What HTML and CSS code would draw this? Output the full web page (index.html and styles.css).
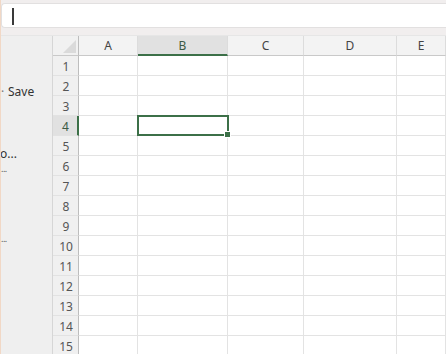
FILE: index.html
```html
<!DOCTYPE html>
<html>
<head>
<meta charset="utf-8">
<link rel="stylesheet" href="styles.css">
</head>
<body>
<div class="topbar">
  <div class="formula"><span class="caret"></span></div>
</div>
<div class="main">
  <div class="side">
    <div class="item item-save"><span class="dot">·</span>Save</div>
    <div class="item item-copy">o...</div>
    <div class="item item-small">...</div>
    <div class="item item-low">...</div>
  </div>
  <div class="sheet">
    <div class="hd corner"><span class="tri"></span></div>
    <div class="hd col">A</div>
    <div class="hd col sel-col">B</div>
    <div class="hd col">C</div>
    <div class="hd col">D</div>
    <div class="hd col">E</div>

    <div class="rh">1</div><div class="c"></div><div class="c"></div><div class="c"></div><div class="c"></div><div class="c"></div>
    <div class="rh">2</div><div class="c"></div><div class="c"></div><div class="c"></div><div class="c"></div><div class="c"></div>
    <div class="rh">3</div><div class="c"></div><div class="c"></div><div class="c"></div><div class="c"></div><div class="c"></div>
    <div class="rh sel-row">4</div><div class="c"></div><div class="c active"></div><div class="c"></div><div class="c"></div><div class="c"></div>
    <div class="rh">5</div><div class="c"></div><div class="c"></div><div class="c"></div><div class="c"></div><div class="c"></div>
    <div class="rh">6</div><div class="c"></div><div class="c"></div><div class="c"></div><div class="c"></div><div class="c"></div>
    <div class="rh">7</div><div class="c"></div><div class="c"></div><div class="c"></div><div class="c"></div><div class="c"></div>
    <div class="rh">8</div><div class="c"></div><div class="c"></div><div class="c"></div><div class="c"></div><div class="c"></div>
    <div class="rh">9</div><div class="c"></div><div class="c"></div><div class="c"></div><div class="c"></div><div class="c"></div>
    <div class="rh">10</div><div class="c"></div><div class="c"></div><div class="c"></div><div class="c"></div><div class="c"></div>
    <div class="rh">11</div><div class="c"></div><div class="c"></div><div class="c"></div><div class="c"></div><div class="c"></div>
    <div class="rh">12</div><div class="c"></div><div class="c"></div><div class="c"></div><div class="c"></div><div class="c"></div>
    <div class="rh">13</div><div class="c"></div><div class="c"></div><div class="c"></div><div class="c"></div><div class="c"></div>
    <div class="rh">14</div><div class="c"></div><div class="c"></div><div class="c"></div><div class="c"></div><div class="c"></div>
    <div class="rh">15</div><div class="c"></div><div class="c"></div><div class="c"></div><div class="c"></div><div class="c"></div>
  </div>
</div>
</body>
</html>
```

FILE: styles.css
```css
* { box-sizing: border-box; }
html, body {
  margin: 0;
  padding: 0;
  width: 446px;
  height: 354px;
  overflow: hidden;
}
body {
  font-family: "Noto Sans", "Open Sans", "Liberation Sans", sans-serif;
  background: #efefef;
  color: #333;
  border-left: 1px solid #f1d8c6;
}
.topbar {
  height: 36px;
  padding: 3px 0 7px 0;
  background: #f1eeee;
  border-bottom: 1px solid #e6e6e6;
}
.formula {
  height: 25px;
  background: #fff;
  border: 1px solid #e2e0e0;
  border-right: none;
  border-radius: 4px 0 0 4px;
  padding: 4px 0 0 10px;
}
.caret {
  display: block;
  width: 2px;
  height: 17px;
  background: #3a3a3a;
}
.main {
  display: flex;
  height: 318px;
}
.side {
  width: 51px;
  flex: none;
  background: #efefef;
  position: relative;
  font-size: 12px;
  color: #333;
  overflow: hidden;
}
.item {
  white-space: nowrap;
  line-height: 16px;
}
.item-save { margin-top: 48px; padding-left: 0; }
.dot { display: inline-block; width: 7px; color: #777; }
.item-copy { margin-top: 46px; margin-left: -1px; }
.item-small { margin-top: 2px; font-size: 9px; line-height: 10px; color: #555; letter-spacing: -0.5px; }
.item-low { margin-top: 60px; font-size: 9px; line-height: 10px; color: #555; letter-spacing: -0.5px; }
.sheet {
  flex: 1;
  display: grid;
  grid-template-columns: 26px 59px 90px 76px 93px 1fr;
  grid-template-rows: 20px repeat(15, 20px);
  background: #fff;
  border-left: 1px solid #d6d6d6;
}
.hd {
  background: #f3f3f3;
  border-bottom: 1px solid #c9c9c9;
  font-size: 12px;
  color: #444;
  display: flex;
  align-items: center;
  justify-content: center;
}
.col { border-right: 1px solid #dcdcdc; }
.corner {
  background: #f1f1f1;
  border-right: 1px solid #bdbdbd;
  position: relative;
}
.tri {
  width: 0;
  height: 0;
  border-left: 13px solid transparent;
  border-bottom: 13px solid #dadada;
  margin: 1px 0 0 8px;
}
.sel-col {
  background: #e1e1e1;
  border-bottom: 2px solid #3c7048;
  color: #3c5a44;
}
.rh {
  background: #f0f0f0;
  border-right: 1px solid #bdbdbd;
  border-bottom: 1px solid #e2e2e2;
  font-size: 12px;
  color: #555;
  display: flex;
  align-items: center;
  justify-content: center;
  padding-left: 1px;
  padding-top: 1px;
}
.sel-row {
  background: #e1e1e1;
  border-right: 2px solid #3c7048;
  color: #3c5a44;
}
.c {
  border-right: 1px solid #e3e3e3;
  border-bottom: 1px solid #e3e3e3;
}
.active {
  position: relative;
}
.active::before {
  content: "";
  position: absolute;
  left: -1px;
  top: -1px;
  right: -2px;
  bottom: -1px;
  border: 2px solid #3c7048;
}
.active::after {
  content: "";
  position: absolute;
  right: -4px;
  bottom: -3px;
  width: 5px;
  height: 5px;
  background: #3c7048;
  border: 1px solid #fff;
}
```
